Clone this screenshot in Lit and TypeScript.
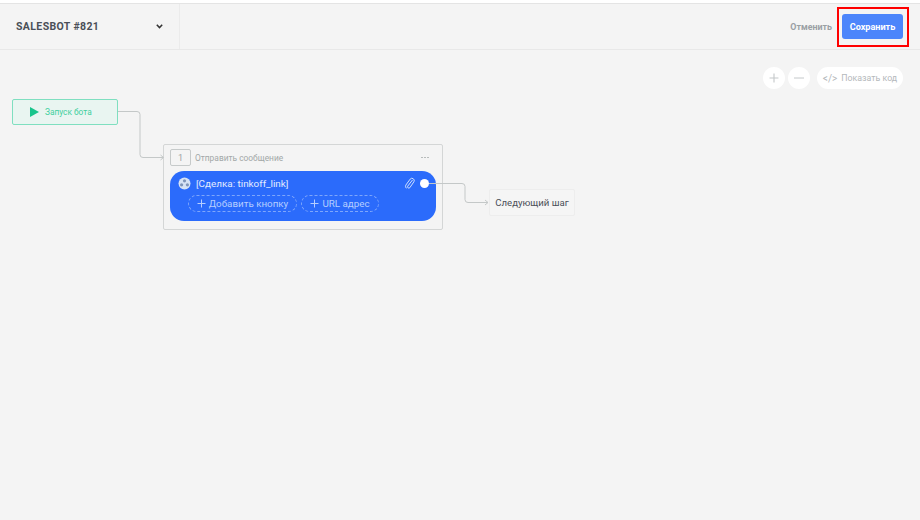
import { LitElement, html, css, svg } from "lit";
import { customElement } from "lit/decorators.js";

@customElement("app-root")
export class AppRoot extends LitElement {
  static styles = css`
    :host {
      display: block;
      width: 920px;
      height: 520px;
      background: #f4f4f4;
      font-family: Roboto, sans-serif;
      overflow: hidden;
      position: relative;
    }
    .strip { height: 3px; background: #fff; border-bottom: 1px solid #e4e4e4; box-sizing: content-box; }
    .top {
      height: 45px;
      display: flex;
      align-items: stretch;
      border-bottom: 1px solid #e8e8e8;
    }
    .bot {
      width: 180px;
      box-sizing: border-box;
      padding: 0 16px;
      display: flex;
      align-items: center;
      justify-content: space-between;
      border-right: 1px solid #ebebeb;
      font-size: 10.5px;
      font-weight: 700;
      letter-spacing: 0.38px;
      color: #4a4f58;
    }
    .actions {
      flex: 1;
      display: flex;
      align-items: center;
      justify-content: flex-end;
      gap: 10px;
      padding-right: 17px;
    }
    .cancel { font-size: 8.9px; font-weight: 700; color: #9aa0a4; }
    .save {
      width: 61px;
      height: 25px;
      background: #4c85fb;
      border-radius: 3px;
      color: #fff;
      font-size: 9.1px;
      font-weight: 700;
      display: flex;
      align-items: center;
      justify-content: center;
    }
    .hl {
      position: absolute;
      left: 837px;
      top: 7px;
      width: 72px;
      height: 40px;
      box-sizing: border-box;
      border: 2px solid #f00;
    }
    .canvas { position: relative; height: 470px; }
    .zoom {
      position: absolute;
      top: 17px;
      right: 17px;
      display: flex;
      gap: 3px;
      align-items: center;
    }
    .rbtn {
      width: 22px;
      height: 22px;
      border-radius: 50%;
      background: #fff;
      display: flex;
      align-items: center;
      justify-content: center;
    }
    .code {
      margin-left: 4px;
      width: 86px;
      height: 22px;
      border-radius: 11px;
      background: #fff;
      display: flex;
      align-items: center;
      justify-content: center;
      gap: 4px;
      color: #b4b8bb;
      font-size: 8.8px;
    }
    .tag { font-size: 10px; }
    .start {
      position: absolute;
      left: 12px;
      top: 49px;
      width: 106px;
      height: 26px;
      box-sizing: border-box;
      background: #e9f5f1;
      border: 1.5px solid #7fdfc0;
      border-radius: 2px;
      display: flex;
      align-items: center;
      gap: 6px;
      padding-left: 17px;
      color: #3fcf9e;
      font-size: 8.3px;
    }
    .wires { position: absolute; left: 0; top: 0; pointer-events: none; }
    .msg {
      position: absolute;
      left: 163px;
      top: 94px;
      width: 280px;
      height: 86px;
      box-sizing: border-box;
      border: 1px solid #d4d6d6;
      border-radius: 2px;
      background: #f4f4f4;
      padding: 4px 6px 0;
    }
    .head {
      display: flex;
      align-items: center;
      gap: 4px;
      height: 17px;
      color: #a3a8a8;
      font-size: 8.4px;
    }
    .num {
      width: 21px;
      height: 17px;
      box-sizing: border-box;
      border: 1px solid #c6caca;
      border-radius: 2px;
      display: flex;
      align-items: center;
      justify-content: center;
      color: #9ea3a3;
      font-size: 9px;
    }
    .dots { margin-left: auto; margin-right: 7px; display: flex; }
    .bubble {
      margin-top: 5px;
      height: 50px;
      background: #2b6bfb;
      border-radius: 14px;
      box-sizing: border-box;
      padding: 5px 7px 0 8px;
      color: #fff;
    }
    .line1 { display: flex; align-items: center; height: 14px; gap: 5px; font-size: 9.9px; color: #e3ecff; }
    .clip { margin-left: auto; display: flex; }
    .dot { width: 9px; height: 9px; border-radius: 50%; background: #fff; }
    .btns { display: flex; gap: 4px; margin-top: 5px; margin-left: 10px; }
    .add {
      height: 17px;
      box-sizing: border-box;
      border: 1px dashed #7ea6fb;
      border-radius: 9px;
      display: flex;
      align-items: center;
      justify-content: center;
      gap: 3px;
      color: #b6ceff;
      font-size: 9.8px;
    }
    .add.a { width: 109px; }
    .add.b { width: 78px; }
    .add svg { flex: none; }
    .next {
      position: absolute;
      left: 489px;
      top: 139px;
      width: 86px;
      height: 27px;
      box-sizing: border-box;
      border: 1px solid #ededed;
      border-radius: 2px;
      background: #f5f5f5;
      display: flex;
      align-items: center;
      justify-content: center;
      color: #4a4f58;
      font-size: 9.6px;
    }
  `;

  private plus(c: string, s = 9) {
    return html`<svg width=${s} height=${s} viewBox="0 0 9 9"><path d="M4.5 0.5v8M0.5 4.5h8" stroke=${c} stroke-width="1" fill="none"/></svg>`;
  }

  render() {
    return html`
      <div class="strip"></div>
      <div class="top">
        <div class="bot">
          <span>SALESBOT #821</span>
          <svg width="7" height="5" viewBox="0 0 7 5"><path d="M0.8 0.8L3.500 3.600L6.200 0.8" stroke="#333" stroke-width="1.500" fill="none"/></svg>
        </div>
        <div class="actions">
          <span class="cancel">Отменить</span>
          <span class="save">Сохранить</span>
        </div>
      </div>
      <div class="hl"></div>
      <div class="canvas">
        <div class="zoom">
          <div class="rbtn">${this.plus("#c4c8ca", 10)}</div>
          <div class="rbtn"><svg width="10" height="2" viewBox="0 0 10 2"><path d="M0 1h10" stroke="#c4c8ca"/></svg></div>
          <div class="code"><span class="tag">&lt;/&gt;</span><span>Показать код</span></div>
        </div>
        <div class="start">
          <svg width="9" height="10" viewBox="0 0 9 10"><path d="M0 0L9 5L0 10Z" fill="#19c48c"/></svg>
          <span>Запуск бота</span>
        </div>
        <div class="msg">
          <div class="head">
            <span class="num">1</span>
            <span>Отправить сообщение</span>
            <span class="dots"><svg width="8" height="2" viewBox="0 0 8 2" fill="#b8bcbc"><rect width="2" height="1"/><rect x="3" width="2" height="1"/><rect x="6" width="2" height="1"/></svg></span>
          </div>
          <div class="bubble">
            <div class="line1">
              <svg width="13" height="13" viewBox="0 0 13 13">
                <circle cx="6.500" cy="6.500" r="6" fill="#d6e2f5"/>
                <circle cx="6.500" cy="3.800" r="1.600" fill="#7f94b8"/>
                <circle cx="3.600" cy="7.800" r="1.600" fill="#7f94b8"/>
                <circle cx="9.400" cy="7.800" r="1.600" fill="#7f94b8"/>
              </svg>
              <span>[Сделка: tinkoff_link]</span>
              <span class="clip"><svg width="11" height="12" viewBox="0 0 11 12" fill="none" stroke="#cfe0ff" stroke-width="1"><path d="M8.500 3L3.700 9.200a1.300 1.300 0 0 0 2.100 1.500L9.900 4.800a2.300 2.300 0 0 0-3.700-2.700L1.800 8.100a2.900 2.900 0 0 0 .6 3.200"/></svg></span>
              <span class="dot"></span>
            </div>
            <div class="btns">
              <div class="add a">${this.plus("#b6ceff")}<span>Добавить кнопку</span></div>
              <div class="add b">${this.plus("#b6ceff")}<span>URL адрес</span></div>
            </div>
          </div>
        </div>
        <div class="next">Следующий шаг</div>
        <svg class="wires" width="920" height="470" fill="none" stroke="#c4c8c8" stroke-width="1">
          ${svg`<path d="M118 61.500H137a3 3 0 0 1 3 3V104.500a3 3 0 0 0 3 3H163"/>
          <path d="M160.500 105l3 2.500l-3 2.500"/>
          <path d="M429 133.500H462a3 3 0 0 1 3 3V149.500a3 3 0 0 0 3 3H488"/>
          <path d="M485 150l3 2.500l-3 2.500"/>`}
        </svg>
      </div>
    `;
  }
}
